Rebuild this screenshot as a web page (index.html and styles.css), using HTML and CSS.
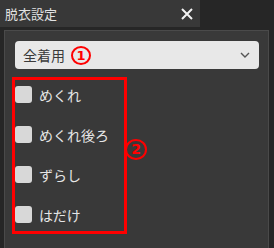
FILE: index.html
```html
<!DOCTYPE html>
<html lang="ja">
<head>
    <meta charset="UTF-8">
    <title>脱衣設定</title>
    <link rel="stylesheet" href="styles.css">
</head>
<body>

<div class="titlebar">
    <div class="tab">
        <span class="title">脱衣設定</span>
        <svg class="close" width="12" height="12" viewBox="0 0 12 12">
            <path d="M1 1 L11 11 M11 1 L1 11" stroke="#f2f2f2" stroke-width="2" fill="none"/>
        </svg>
    </div>
</div>

<div class="panel">
    <div class="select">
        <span class="select-text">全着用</span>
        <span class="mark mark-one">1</span>
        <svg class="chevron" width="10" height="6" viewBox="0 0 10 6">
            <path d="M1 1 L5 5 L9 1" stroke="#555" stroke-width="1.4" fill="none"/>
        </svg>
    </div>

    <div class="options">
        <div class="option"><span class="check"></span><span class="label">めくれ</span></div>
        <div class="option"><span class="check"></span><span class="label">めくれ後ろ</span></div>
        <div class="option"><span class="check"></span><span class="label">ずらし</span></div>
        <div class="option"><span class="check"></span><span class="label">はだけ</span></div>
        <span class="mark mark-two">2</span>
    </div>
</div>

</body>
</html>
```

FILE: styles.css
```css
body {
    margin: 0;
    background-color: #262626;
    font-family: "Noto Sans CJK JP", "Noto Sans", sans-serif;
    width: 274px;
    height: 248px;
    overflow: hidden;
}
.titlebar {
    height: 27px;
    display: flex;
}
.tab {
    width: 200px;
    background-color: #383838;
    display: flex;
    align-items: center;
    justify-content: space-between;
    padding: 0 6px 0 5px;
    box-sizing: border-box;
}
.title {
    color: #e2e2e2;
    font-size: 13px;
    line-height: 27px;
}
.close {
    display: block;
    margin-right: 1px;
}
.panel {
    margin: 3px 0 0 4px;
    width: 265px;
    height: 230px;
    box-sizing: border-box;
    border: 1px solid #4a4a4a;
    background-color: #393939;
    padding: 10px 0 0 10px;
}
.select {
    width: 244px;
    height: 28px;
    box-sizing: border-box;
    background-color: #e8e8e8;
    border-radius: 4px;
    display: flex;
    align-items: center;
    padding: 0 9px 0 8px;
}
.select-text {
    color: #3a3a3a;
    font-size: 14px;
}
.mark {
    color: #f00;
    border: 2px solid #f00;
    border-radius: 50%;
    font-family: "DejaVu Sans", sans-serif;
    font-weight: bold;
    text-align: center;
    box-sizing: border-box;
}
.mark-one {
    width: 20px;
    height: 19px;
    font-size: 13px;
    line-height: 15px;
    margin-left: 6px;
}
.chevron {
    margin-left: auto;
}
.options {
    position: relative;
    margin: 8px 0 0 -3px;
    width: 115px;
    height: 157px;
    box-sizing: border-box;
    border: 3px solid #f00;
    padding: 6px 0 8px 0;
    display: flex;
    flex-direction: column;
    gap: 23px;
}
.option {
    display: flex;
    align-items: center;
    height: 17px;
}
.check {
    width: 17px;
    height: 17px;
    background-color: #d8d8d8;
    border-radius: 3px;
}
.label {
    margin-left: 7px;
    color: #e6e6e6;
    font-size: 14px;
}
.mark-two {
    position: absolute;
    left: 110px;
    top: 59px;
    width: 22px;
    height: 21px;
    font-size: 14px;
    line-height: 17px;
}
```
